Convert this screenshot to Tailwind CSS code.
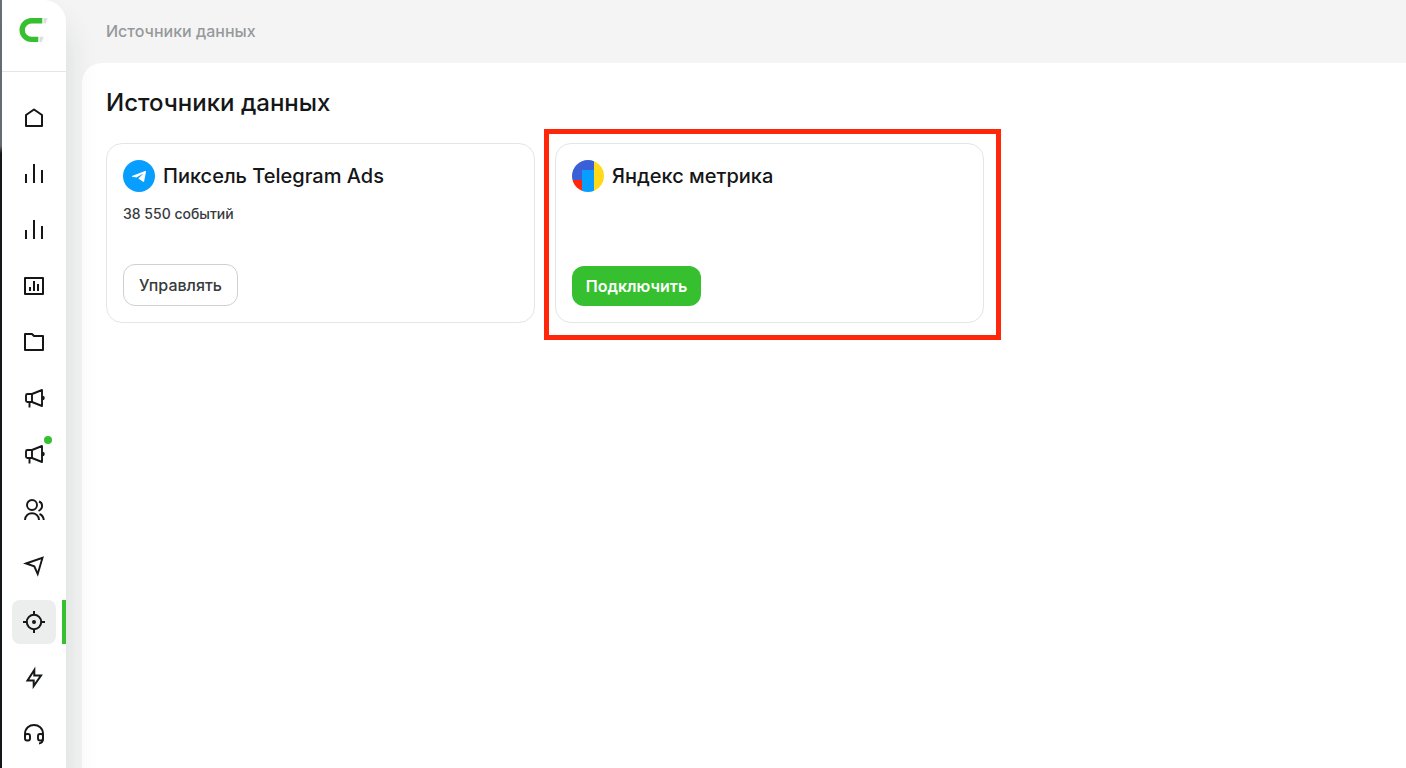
<!DOCTYPE html>
<html lang="ru">
<head>
  <meta charset="utf-8">
  <title>Источники данных</title>
  <script src="https://cdn.jsdelivr.net/npm/@tailwindcss/browser@4"></script>
</head>
<body class="flex h-screen overflow-hidden bg-[#f4f4f4] font-['Inter',sans-serif] text-[#141617]">

  <!-- window edge -->
  <div class="w-[2px] shrink-0 bg-linear-to-b from-[#6b7075] from-[19%] to-[#15181a] to-[20%]"></div>

  <!-- sidebar -->
  <aside class="z-10 flex w-16 shrink-0 flex-col rounded-tr-[22px] bg-white shadow-[0_24px_32px_rgba(20,35,45,0.13)]">
    <a href="#" aria-label="Главная страница" class="flex h-[72px] justify-center border-b border-[#e3e5e6] pt-4">
      <svg class="h-7 w-8" viewBox="0 0 32 28" fill="none">
        <path d="M24.300 2H13.500a12 12 0 0 0 0 24h6.800v-5.300H13.500a6.600 6.600 0 0 1 0-13.200h10.800z" fill="#36c02f"/>
        <path d="M25.500 2h4l-1.800 5.500h-2.200zM21.500 20.700h4.200l-1.800 5.300h-2.400z" fill="#dcdfe0"/>
      </svg>
    </a>

    <nav class="flex flex-col items-center gap-3 pt-6">
      <a href="#" aria-label="Главная" class="flex size-11 items-center justify-center rounded-lg">
        <svg class="size-6" viewBox="0 0 24 24" fill="none" stroke="currentColor" stroke-width="2" stroke-linejoin="round"><path d="M4 9L12 3.500L20 9V20H4z"/></svg>
      </a>
      <a href="#" aria-label="Статистика" class="flex size-11 items-center justify-center rounded-lg">
        <svg class="size-6" viewBox="0 0 24 24" fill="none" stroke="currentColor" stroke-width="2"><path d="M4 12v9M12 2v19M20 8v13"/></svg>
      </a>
      <a href="#" aria-label="Аналитика" class="flex size-11 items-center justify-center rounded-lg">
        <svg class="size-6" viewBox="0 0 24 24" fill="none" stroke="currentColor" stroke-width="2"><path d="M4 12v9M12 2v19M20 8v13"/></svg>
      </a>
      <a href="#" aria-label="Отчёты" class="flex size-11 items-center justify-center rounded-lg">
        <svg class="size-6" viewBox="0 0 24 24" fill="none" stroke="currentColor" stroke-width="2" stroke-linejoin="round"><path d="M3 4h18v16H3zM8 13v4M12 7v10M16 10v7"/></svg>
      </a>
      <a href="#" aria-label="Папки" class="flex size-11 items-center justify-center rounded-lg">
        <svg class="size-6" viewBox="0 0 24 24" fill="none" stroke="currentColor" stroke-width="2" stroke-linejoin="round"><path d="M3 4h7l2 2h9v14H3z"/></svg>
      </a>
      <a href="#" aria-label="Реклама" class="flex size-11 items-center justify-center rounded-lg">
        <svg class="size-6" viewBox="0 0 24 24" fill="none" stroke="currentColor" stroke-width="1.900" stroke-linejoin="round"><path d="M10 8H5.500Q4 8 4 9.500v5Q4 16 5.500 16H10zM10 8L20 4v16L10 16M7.500 16v5.500M21 10.500q1.500 1.500 0 3"/></svg>
      </a>
      <a href="#" aria-label="Кампании" class="relative flex size-11 items-center justify-center rounded-lg">
        <svg class="size-6" viewBox="0 0 24 24" fill="none" stroke="currentColor" stroke-width="1.900" stroke-linejoin="round"><path d="M10 8H5.500Q4 8 4 9.500v5Q4 16 5.500 16H10zM10 8L20 4v16L10 16M7.500 16v5.500M21 10.500q1.500 1.500 0 3"/></svg>
        <span class="absolute top-1 right-1 size-2 rounded-full bg-[#36c02f]"></span>
      </a>
      <a href="#" aria-label="Пользователи" class="flex size-11 items-center justify-center rounded-lg">
        <svg class="size-6" viewBox="0 0 24 24" fill="none" stroke="currentColor" stroke-width="1.900"><circle cx="10" cy="7" r="5"/><path d="M3 22c0-9 14-9 14 0M17 3.500c4 1.500 4.500 7-.5 9.500M17.500 16q3.800 1.500 4.300 6"/></svg>
      </a>
      <a href="#" aria-label="Рассылки" class="flex size-11 items-center justify-center rounded-lg">
        <svg class="size-6" viewBox="0 0 24 24" fill="none" stroke="currentColor" stroke-width="1.900" stroke-linejoin="miter"><path d="M4 9.500L20.500 3.800L15.700 20L12.300 12.300z"/></svg>
      </a>
      <a href="#" aria-label="Источники данных" aria-current="page" class="relative flex size-11 items-center justify-center rounded-lg bg-[#eceeee]">
        <svg class="size-6" viewBox="0 0 24 24" fill="none" stroke="currentColor" stroke-width="2"><circle cx="12" cy="12" r="7.200"/><circle cx="12" cy="12" r="2" fill="currentColor" stroke="none"/><path d="M12 1v4M12 19v4M1 12h4M19 12h4"/></svg>
        <span class="absolute top-0 -right-[10px] h-11 w-1 bg-[#36c02f]"></span>
      </a>
      <a href="#" aria-label="Автоматизация" class="flex size-11 items-center justify-center rounded-lg">
        <svg class="size-6" viewBox="0 0 24 24" fill="none" stroke="currentColor" stroke-width="2"><path d="M12.300 4L5.500 14.500H11.700V20L19 9.500H12.300z"/></svg>
      </a>
      <a href="#" aria-label="Поддержка" class="flex size-11 items-center justify-center rounded-lg">
        <svg class="size-6" viewBox="0 0 24 24" fill="none" stroke="currentColor" stroke-width="1.900" stroke-linejoin="round"><path d="M3 15v-3C3 0 21 0 21 12v4.500q0 4.500-4 5"/><rect x="3" y="12" width="5" height="6.500" rx="2"/><rect x="16" y="12" width="5" height="6.500" rx="2"/></svg>
      </a>
    </nav>
  </aside>

  <!-- page -->
  <div class="flex min-w-0 flex-1 flex-col pl-4">
    <header class="flex h-[63px] shrink-0 items-center pb-0.5 pl-6">
      <span class="text-base font-medium text-[#96999b]">Источники данных</span>
    </header>

    <main class="flex-1 rounded-tl-[20px] bg-white px-6 pt-6">
      <h1 class="text-2xl leading-8 font-medium">Источники данных</h1>

      <div class="mt-6 grid grid-cols-[repeat(auto-fill,429px)] gap-5">
        <section class="flex h-[180px] flex-col items-start rounded-[16px] border border-[#e3e5e6] p-4">
          <div class="flex items-center gap-2">
            <svg class="size-8" viewBox="0 0 32 32"><circle cx="16" cy="16" r="16" fill="#089eff"/><path d="M9 15.900L22 11Q23.200 10.700 23 11.800L21.200 21Q20.900 22.300 19.700 21.600L15.400 18.400L19.600 14.200Q19.800 13.700 19.300 14L13.500 17.500L9.200 16.700Q8.500 16.200 9 15.900z" fill="#fff"/></svg>
            <h2 class="text-xl font-medium">Пиксель Telegram Ads</h2>
          </div>
          <p class="mt-3 text-sm font-medium text-[#373b3d]">38 550 событий</p>
          <button type="button" class="mt-auto h-[42px] w-[115px] rounded-[12px] border border-[#cdd1d2] text-base font-medium text-[#373b3d]">Управлять</button>
        </section>

        <section class="relative flex h-[180px] flex-col items-start rounded-[16px] border border-[#e3e5e6] p-4">
          <div class="flex items-center gap-2">
            <svg class="size-8" viewBox="0 0 32 32">
              <clipPath id="round"><circle cx="16" cy="16" r="16"/></clipPath>
              <g clip-path="url(#round)">
                <path d="M0 0h22v20H0z" fill="#3b5fd6"/>
                <path d="M0 20h10v12H0z" fill="#ff260a"/>
                <path d="M10 10h12v22H10z" fill="#089eff"/>
                <path d="M22 0h10v32H22z" fill="#ffd91a"/>
              </g>
            </svg>
            <h2 class="text-xl font-medium">Яндекс метрика</h2>
          </div>
          <button type="button" class="mt-auto h-10 w-[129px] rounded-[12px] bg-[#36c02f] text-base font-semibold text-white">Подключить</button>
          <!-- highlight frame -->
          <div class="pointer-events-none absolute -top-[15px] -right-[18px] -bottom-[18px] -left-[12px] border-5 border-[#ff260a]"></div>
        </section>
      </div>
    </main>
  </div>

</body>
</html>
